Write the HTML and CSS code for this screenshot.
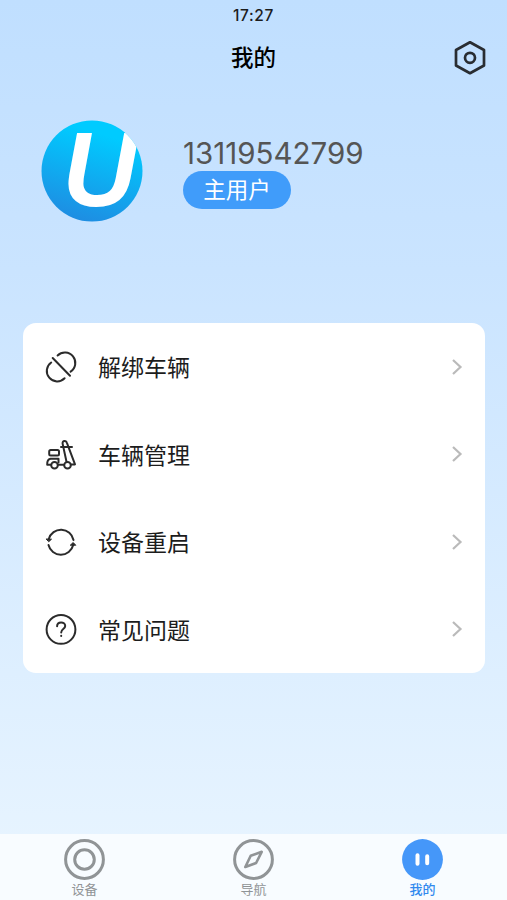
FILE: index.html
```html
<!DOCTYPE html>
<html lang="zh-CN">
<head>
  <meta charset="UTF-8">
  <title>我的</title>
  <meta name="viewport" content="width=device-width, initial-scale=1">
  <link rel="stylesheet" href="styles.css">
</head>
<body>

  <div class="status-bar">17:27</div>

  <header class="header">
    <h1>我的</h1>
    <svg class="settings" viewBox="0 0 34 36" fill="none" stroke="#292d32" stroke-width="2.7" stroke-linejoin="round">
      <path d="M17 2.3 L31 10 V25.5 L17 33.2 L3 25.5 V10 Z"/>
      <circle cx="17" cy="17.8" r="5"/>
    </svg>
  </header>

  <section class="profile">
    <svg class="avatar" viewBox="0 0 102 102">
      <defs>
        <linearGradient id="avatarBg" x1="0.65" y1="0.15" x2="0.4" y2="1">
          <stop offset="0" stop-color="#00cbff"/>
          <stop offset="1" stop-color="#1e8de2"/>
        </linearGradient>
        <clipPath id="avatarClip"><circle cx="51" cy="51" r="50.5"/></clipPath>
      </defs>
      <circle cx="51" cy="51" r="50.5" fill="url(#avatarBg)"/>
      <g clip-path="url(#avatarClip)">
        <text class="avatar-letter" x="21.5" y="85.5" textLength="74.5" lengthAdjust="spacingAndGlyphs">U</text>
      </g>
    </svg>
    <div class="user">
      <p class="phone">13119542799</p>
      <span class="role">主用户</span>
    </div>
  </section>

  <main class="menu">
    <div class="menu-item">
      <svg class="menu-icon" viewBox="0 0 32 32">
        <path d="M12.6 4.5 A10.4 10.4 0 1 1 25.6 20.6"/>
        <path d="M6.2 11.5 A10.4 10.4 0 1 0 19.6 27.3"/>
        <path d="M7.7 7 L25 24.8"/>
      </svg>
      <span>解绑车辆</span>
      <svg class="arrow" viewBox="0 0 12 18"><path d="M2 2 L9.5 9 L2 16"/></svg>
    </div>
    <div class="menu-item">
      <svg class="menu-icon" viewBox="0 0 32 32">
        <rect x="4.2" y="12" width="9.8" height="5.4" rx="1.5"/>
        <path d="M6 26.8 H2.2 C2 23.2 3.2 21.2 5.5 20.7 H13.5 V24.5"/>
        <path d="M13 26.8 H19"/>
        <path d="M21.4 23.2 L17.6 5.6 C17.3 2.1 21.2 2.1 22 5.1 L30 26.4 H26"/>
        <path d="M16 9 H27"/>
        <circle cx="9.5" cy="27.2" r="3.3"/>
        <circle cx="22.5" cy="27.2" r="3.3"/>
      </svg>
      <span>车辆管理</span>
      <svg class="arrow" viewBox="0 0 12 18"><path d="M2 2 L9.5 9 L2 16"/></svg>
    </div>
    <div class="menu-item">
      <svg class="menu-icon" viewBox="0 0 32 32">
        <path d="M3.8 13 A12.7 12.7 0 0 1 28.5 14"/>
        <path d="M28.2 19 A12.7 12.7 0 0 1 3.5 19"/>
        <path class="solid" d="M1.5 13 L6.5 13.2 L4 15.5 Z M25.5 19 L28.2 16.5 L30.5 19 Z"/>
      </svg>
      <span>设备重启</span>
      <svg class="arrow" viewBox="0 0 12 18"><path d="M2 2 L9.5 9 L2 16"/></svg>
    </div>
    <div class="menu-item">
      <svg class="menu-icon" viewBox="0 0 32 32">
        <circle cx="16" cy="16.4" r="14.4"/>
        <path d="M12.1 13.2 C12.1 8.2 20.2 8.2 20.2 12.9 C20.2 16.1 16.2 15.9 16.2 19.4"/>
        <path d="M16.2 22.7 V23"/>
      </svg>
      <span>常见问题</span>
      <svg class="arrow" viewBox="0 0 12 18"><path d="M2 2 L9.5 9 L2 16"/></svg>
    </div>
  </main>

  <nav class="tabbar">
    <div class="tab">
      <svg class="tab-icon" viewBox="0 0 41 41">
        <circle cx="20.5" cy="20.5" r="18.9"/>
        <circle cx="20.5" cy="20.5" r="9.8"/>
      </svg>
      <span>设备</span>
    </div>
    <div class="tab">
      <svg class="tab-icon" viewBox="0 0 41 41">
        <circle cx="20.5" cy="20.5" r="18.9"/>
        <path class="needle" d="M28.7 12.8 L17.7 16.7 L12.3 28 L23.1 24 Z"/>
      </svg>
      <span>导航</span>
    </div>
    <div class="tab active">
      <svg class="tab-icon" viewBox="0 0 41 41">
        <circle class="face" cx="20.5" cy="20.5" r="20.4"/>
        <path class="eyes" d="M15.5 16.2 V24.8 M25.2 17.2 V24.2"/>
      </svg>
      <span>我的</span>
    </div>
  </nav>

</body>
</html>
```

FILE: styles.css
```css
* { margin: 0; padding: 0; box-sizing: border-box; }
body {
  height: 100vh;
  background: linear-gradient(180deg, #c0dfff 0%, #cae4ff 30%, #e7f4ff 95%);
  color: #1c1c1c;
  font-family: "Inter", "Noto Sans CJK SC", sans-serif;
  display: flex;
  flex-direction: column;
  overflow: hidden;
}
.status-bar {
  height: 30px;
  line-height: 31px;
  text-align: center;
  font-size: 15.5px;
  font-weight: 500;
  letter-spacing: 0.6px;
}
.header {
  height: 56px;
  padding: 0 20px;
  display: grid;
  grid-template-columns: 34px 1fr 34px;
  align-items: center;
}
.header h1 {
  grid-column: 2;
  text-align: center;
  font-size: 22.5px;
  font-weight: 500;
  line-height: 32px;
  color: #000;
}
.settings { width: 34px; height: 36px; }
.profile {
  height: 237px;
  padding: 34px 0 0 41px;
  display: flex;
  align-items: flex-start;
}
.avatar { width: 102px; height: 102px; }
.avatar-letter {
  font: italic bold 106px "Liberation Sans", sans-serif;
  fill: #fff;
}
.user { margin: 16px 0 0 40px; }
.phone {
  font-size: 29.5px;
  line-height: 35px;
  color: #555;
}
.role {
  display: block;
  width: 108px;
  height: 38px;
  line-height: 38px;
  border-radius: 19px;
  background: #409cfa;
  color: #fff;
  font-size: 22.5px;
  text-align: center;
}
.menu {
  height: 350px;
  margin: 0 22px 0 23px;
  border-radius: 13px;
  background: #fff;
  display: flex;
  flex-direction: column;
}
.menu-item {
  flex: 1;
  padding: 0 22px;
  display: flex;
  align-items: center;
  font-size: 23px;
}
.menu-item span { flex: 1; margin-left: 21px; padding-bottom: 1px; }
.menu-icon {
  width: 32px;
  height: 32px;
  fill: none;
  stroke: #2b2b2b;
  stroke-width: 2;
  stroke-linecap: round;
  stroke-linejoin: round;
}
.menu-icon .solid { fill: #2b2b2b; stroke-width: 1; }
.arrow {
  width: 12px;
  height: 18px;
  fill: none;
  stroke: #bababa;
  stroke-width: 2.2;
}
.tabbar {
  height: 66px;
  margin-top: auto;
  background: #f8fcff;
  display: flex;
}
.tab {
  flex: 1;
  padding-top: 5px;
  display: flex;
  flex-direction: column;
  align-items: center;
  font-size: 13px;
  line-height: 19px;
  color: #909496;
}
.tab-icon {
  width: 41px;
  height: 41px;
  fill: none;
  stroke: #909496;
  stroke-width: 3;
}
.tab-icon .needle { stroke-width: 2.6; stroke-linejoin: round; }
.tab-icon .face { fill: #4597f9; stroke: none; }
.tab-icon .eyes { stroke: #fff; stroke-width: 4; stroke-linecap: round; }
.active { color: #3189ee; font-weight: 500; }
```
